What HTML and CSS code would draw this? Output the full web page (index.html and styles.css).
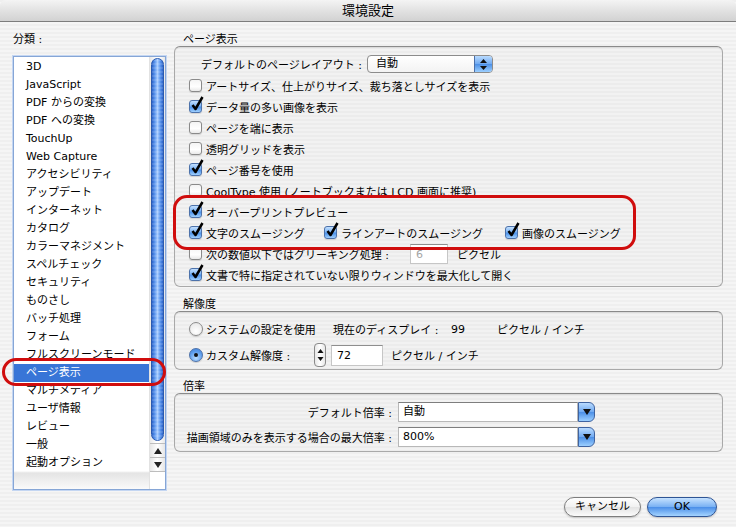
FILE: index.html
```html
<!DOCTYPE html>
<html lang="ja">
<head>
    <meta charset="UTF-8">
    <title>環境設定</title>
    <link rel="stylesheet" href="styles.css">
</head>
<body>
<div class="window">
    <div class="titlebar">環境設定</div>

    <div class="main">
        <div class="side">
            <div class="side-label">分類 :</div>
            <div class="listbox">
                <ul class="items">
                    <li>3D</li>
                    <li>JavaScript</li>
                    <li>PDF からの変換</li>
                    <li>PDF への変換</li>
                    <li>TouchUp</li>
                    <li>Web Capture</li>
                    <li>アクセシビリティ</li>
                    <li>アップデート</li>
                    <li>インターネット</li>
                    <li>カタログ</li>
                    <li>カラーマネジメント</li>
                    <li>スペルチェック</li>
                    <li>セキュリティ</li>
                    <li>ものさし</li>
                    <li>バッチ処理</li>
                    <li>フォーム</li>
                    <li>フルスクリーンモード</li>
                    <li class="selected">ページ表示</li>
                    <li>マルチメディア</li>
                    <li>ユーザ情報</li>
                    <li>レビュー</li>
                    <li>一般</li>
                    <li>起動オプション</li>
                </ul>
                <div class="scrollbar">
                    <div class="track"><div class="thumb"></div></div>
                    <div class="arrow">
                        <svg width="8" height="6" viewBox="0 0 8 6"><path d="M4 0 L8 6 L0 6 Z" fill="#222"/></svg>
                    </div>
                    <div class="arrow">
                        <svg width="8" height="6" viewBox="0 0 8 6"><path d="M0 0 L8 0 L4 6 Z" fill="#222"/></svg>
                    </div>
                    <div class="corner"></div>
                </div>
            </div>
        </div>

        <div class="panel">
            <div class="group-label">ページ表示</div>
            <div class="group group-page">
                <div class="row-popup">
                    <span class="popup-label">デフォルトのページレイアウト :</span>
                    <span class="popup">
                        <span class="popup-text">自動</span>
                        <span class="popup-btn">
                            <svg width="7" height="11" viewBox="0 0 7 11"><path d="M3.5 0 L7 4 L0 4 Z M0 7 L7 7 L3.5 11 Z" fill="#111"/></svg>
                        </span>
                    </span>
                </div>
                <div class="row"><span class="cb"></span><span>アートサイズ、仕上がりサイズ、裁ち落としサイズを表示</span></div>
                <div class="row"><span class="cb on"><svg width="14" height="16" viewBox="0 0 14 16"><path d="M2.5 9 L5.5 13 L12.5 1" fill="none" stroke="#000" stroke-width="2.5" stroke-linejoin="round"/></svg></span><span>データ量の多い画像を表示</span></div>
                <div class="row"><span class="cb"></span><span>ページを端に表示</span></div>
                <div class="row"><span class="cb"></span><span>透明グリッドを表示</span></div>
                <div class="row"><span class="cb on"><svg width="14" height="16" viewBox="0 0 14 16"><path d="M2.5 9 L5.5 13 L12.5 1" fill="none" stroke="#000" stroke-width="2.5" stroke-linejoin="round"/></svg></span><span>ページ番号を使用</span></div>
                <div class="row"><span class="cb"></span><span>CoolType 使用 (ノートブックまたは LCD 画面に推奨)</span></div>
                <div class="row"><span class="cb on"><svg width="14" height="16" viewBox="0 0 14 16"><path d="M2.5 9 L5.5 13 L12.5 1" fill="none" stroke="#000" stroke-width="2.5" stroke-linejoin="round"/></svg></span><span>オーバープリントプレビュー</span></div>
                <div class="row">
                    <span class="smooth smooth-text"><span class="cb on"><svg width="14" height="16" viewBox="0 0 14 16"><path d="M2.5 9 L5.5 13 L12.5 1" fill="none" stroke="#000" stroke-width="2.5" stroke-linejoin="round"/></svg></span><span>文字のスムージング</span></span>
                    <span class="smooth smooth-line"><span class="cb on"><svg width="14" height="16" viewBox="0 0 14 16"><path d="M2.5 9 L5.5 13 L12.5 1" fill="none" stroke="#000" stroke-width="2.5" stroke-linejoin="round"/></svg></span><span>ラインアートのスムージング</span></span>
                    <span class="smooth"><span class="cb on"><svg width="14" height="16" viewBox="0 0 14 16"><path d="M2.5 9 L5.5 13 L12.5 1" fill="none" stroke="#000" stroke-width="2.5" stroke-linejoin="round"/></svg></span><span>画像のスムージング</span></span>
                </div>
                <div class="row">
                    <span class="cb"></span><span class="greek-label">次の数値以下ではグリーキング処理 :</span>
                    <span class="field field-greek disabled">6</span>
                    <span>ピクセル</span>
                </div>
                <div class="row"><span class="cb on"><svg width="14" height="16" viewBox="0 0 14 16"><path d="M2.5 9 L5.5 13 L12.5 1" fill="none" stroke="#000" stroke-width="2.5" stroke-linejoin="round"/></svg></span><span>文書で特に指定されていない限りウィンドウを最大化して開く</span></div>
            </div>

            <div class="group-label">解像度</div>
            <div class="group group-res">
                <div class="row res-row1">
                    <span class="radio"></span>
                    <span class="res-system">システムの設定を使用</span>
                    <span class="res-current">現在のディスプレイ :</span>
                    <span class="res-value">99</span>
                    <span>ピクセル / インチ</span>
                </div>
                <div class="row res-row2">
                    <span class="radio on"></span>
                    <span class="res-custom">カスタム解像度 :</span>
                    <span class="stepper">
                        <svg width="7" height="16" viewBox="0 0 7 16"><path d="M3.5 2 L6.5 6 L0.5 6 Z M0.5 10 L6.5 10 L3.5 14 Z" fill="#111"/></svg>
                    </span>
                    <span class="field field-res">72</span>
                    <span>ピクセル / インチ</span>
                </div>
            </div>

            <div class="group-label">倍率</div>
            <div class="group group-zoom">
                <div class="combo-row">
                    <span class="combo-label">デフォルト倍率 :</span>
                    <span class="combo">
                        <span class="combo-text">自動</span>
                        <span class="combo-btn"><svg width="8" height="6" viewBox="0 0 8 6"><path d="M0 0 L8 0 L4 6 Z" fill="#111"/></svg></span>
                    </span>
                </div>
                <div class="combo-row">
                    <span class="combo-label">描画領域のみを表示する場合の最大倍率 :</span>
                    <span class="combo">
                        <span class="combo-text">800%</span>
                        <span class="combo-btn"><svg width="8" height="6" viewBox="0 0 8 6"><path d="M0 0 L8 0 L4 6 Z" fill="#111"/></svg></span>
                    </span>
                </div>
            </div>
        </div>
    </div>

    <div class="footer">
        <span class="btn">キャンセル</span>
        <span class="btn btn-ok">OK</span>
    </div>

    <!-- red annotation marks drawn over the dialog -->
    <div class="mark mark-list"></div>
    <div class="mark mark-options"></div>
</div>
</body>
</html>
```

FILE: styles.css
```css
*,
*:after,
*:before
{
    margin: 0;
    padding: 0;
    box-sizing: border-box;
}

body
{
    width: 736px;
    height: 527px;
    overflow: hidden;
    font-family: "DejaVu Sans", "Noto Sans CJK JP", sans-serif;
    font-size: 11px;
    color: #000;
}

.window
{
    position: relative;
    width: 736px;
    height: 527px;
    background: repeating-linear-gradient(#efefef 0 2px, #f5f5f5 2px 4px);
}

.titlebar
{
    height: 22px;
    line-height: 21px;
    text-align: center;
    font-size: 13px;
    border-bottom: 1px solid #7d7d7d;
    border-radius: 6px 6px 0 0;
    background: linear-gradient(#f4f4f4, #e2e2e2 50%, #d2d2d2);
}

.main
{
    display: flex;
    padding: 12px 13px 0 13px;
}

/* left column */
.side
{
    width: 153px;
}

.side-label
{
    height: 12px;
    line-height: 12px;
    margin-bottom: 10px;
}

.listbox
{
    display: flex;
    height: 434px;
    border: 1px solid #86a6d6;
    box-shadow: 0 0 0 1px #c4d6f2;
    background: #fff;
}

.items
{
    list-style: none;
    flex: 1;
    padding-top: 1px;
    background: linear-gradient(to bottom, #fff 414px, #e4e4e4 416px, #fafafa 432px);
}

.items li
{
    height: 18px;
    line-height: 18px;
    padding-left: 12px;
    white-space: nowrap;
}

.items li.selected
{
    background: #3875d7;
    color: #fff;
}

.scrollbar
{
    width: 16px;
    display: flex;
    flex-direction: column;
    border-left: 1px solid #e2e2e2;
}

.track
{
    height: 386px;
    padding: 1px 1px 2px 1px;
    background: linear-gradient(to right, #e8e8e8, #fff 40%, #fff 60%, #e8e8e8);
}

.thumb
{
    height: 100%;
    border-radius: 7px;
    border: 1px solid #2b5bb0;
    background:
        repeating-linear-gradient(rgba(255,255,255,.12) 0 2px, rgba(255,255,255,0) 2px 4px),
        linear-gradient(to right, #2c63c8, #5a95ee 25%, #a8cdff 50%, #5a95ee 75%, #2c63c8);
}

.arrow
{
    height: 14px;
    display: flex;
    align-items: center;
    justify-content: center;
    border-top: 1px solid #bdbdbd;
    background: linear-gradient(to right, #e6e6e6, #fff 50%, #e6e6e6);
}

.corner
{
    flex: 1;
    border-top: 1px solid #bdbdbd;
    background: #fff;
}

/* right column */
.panel
{
    width: 549px;
    margin-left: 8px;
}

.group-label
{
    height: 12px;
    line-height: 12px;
    padding-left: 9px;
}

.group
{
    border: 1px solid #a9a9a9;
    border-top-color: #8a8a8a;
    border-radius: 6px;
    background: repeating-linear-gradient(#ececec 0 2px, #f2f2f2 2px 4px);
    box-shadow: inset 0 1px 1px rgba(0,0,0,.08);
}

.group-page
{
    height: 241px;
    padding-top: 8px;
    margin-bottom: 12px;
}

.group-res
{
    height: 59px;
    padding-top: 7px;
    margin-bottom: 11px;
}

.group-zoom
{
    height: 59px;
    padding-top: 8px;
}

.row-popup
{
    display: flex;
    align-items: center;
    height: 18px;
    margin-bottom: 2px;
}

.popup-label
{
    width: 187px;
    text-align: right;
    margin-right: 5px;
}

.popup
{
    display: flex;
    width: 126px;
    height: 18px;
    border: 1px solid #8c8c8c;
    border-radius: 4px;
    background: linear-gradient(#fff, #f3f3f3);
    overflow: hidden;
}

.popup-text
{
    flex: 1;
    padding-left: 8px;
    line-height: 16px;
}

.popup-btn
{
    width: 18px;
    display: flex;
    align-items: center;
    justify-content: center;
    border-left: 1px solid #4a6fa8;
    background: linear-gradient(#b9dbff, #6fa9f1 50%, #4b8fe6 51%, #9ccfff);
}

.row
{
    display: flex;
    align-items: center;
    height: 21px;
    padding-left: 14px;
    white-space: nowrap;
}

.cb
{
    position: relative;
    flex: none;
    width: 13px;
    height: 13px;
    margin-right: 4px;
    border: 1px solid #8a8a8a;
    border-radius: 3px;
    background: linear-gradient(#f4f4f4, #fff 60%, #e9e9e9);
    box-shadow: 0 1px 1px rgba(0,0,0,.12);
}

.cb.on
{
    border-color: #4d72aa;
    background: linear-gradient(#c3e0ff, #7db4f4 45%, #4b90e8 55%, #9fd0ff);
}

.cb svg
{
    position: absolute;
    left: 0;
    top: -5px;
    overflow: visible;
}

.smooth
{
    display: flex;
    align-items: center;
}

.smooth-text
{
    width: 135px;
}

.smooth-line
{
    width: 181px;
}

.greek-label
{
    width: 204px;
}

.field
{
    height: 20px;
    line-height: 19px;
    background: #fff;
    border: 1px solid #c6c6c6;
    border-top-color: #8e8e8e;
    padding-left: 5px;
}

.field-greek
{
    width: 38px;
    margin-right: 9px;
}

.disabled
{
    color: #a5a5a5;
}

/* resolution */
.radio
{
    flex: none;
    width: 14px;
    height: 14px;
    margin-right: 3px;
    border: 1px solid #8a8a8a;
    border-radius: 50%;
    background: radial-gradient(circle at 50% 70%, #fff, #e4e4e4);
    box-shadow: 0 1px 1px rgba(0,0,0,.15);
    display: flex;
    align-items: center;
    justify-content: center;
}

.radio.on
{
    border-color: #4d72aa;
    background: radial-gradient(circle at 50% 75%, #b8dcff, #5b9cec 60%, #3f7fd8);
}

.radio.on:after
{
    content: "";
    width: 4px;
    height: 4px;
    border-radius: 50%;
    background: #111;
}

.res-row1
{
    height: 20px;
}

.res-row2
{
    height: 24px;
    margin-top: 4px;
}

.res-system
{
    width: 127px;
}

.res-current
{
    width: 118px;
}

.res-value
{
    width: 46px;
}

.res-custom
{
    width: 108px;
}

.stepper
{
    width: 12px;
    height: 24px;
    border: 1px solid #8a8a8a;
    border-radius: 4px;
    background: linear-gradient(to right, #e8e8e8, #fff 50%, #e8e8e8);
    display: flex;
    align-items: center;
    justify-content: center;
    margin-right: 5px;
}

.field-res
{
    width: 52px;
    height: 21px;
    margin-right: 8px;
}

/* magnification */
.combo-row
{
    display: flex;
    align-items: center;
    height: 20px;
    margin-bottom: 5px;
}

.combo-label
{
    width: 217px;
    padding-left: 11px;
    text-align: right;
    white-space: nowrap;
    margin-right: 6px;
}

.combo
{
    display: flex;
    width: 197px;
    height: 20px;
}

.combo-text
{
    flex: 1;
    background: #fff;
    border: 1px solid #b8b8b8;
    border-top-color: #7e7e7e;
    padding-left: 4px;
    line-height: 18px;
}

.combo-btn
{
    width: 17px;
    display: flex;
    align-items: center;
    justify-content: center;
    border: 1px solid #3f63a0;
    border-radius: 0 6px 6px 0;
    background: linear-gradient(#b9dbff, #6fa9f1 50%, #4b8fe6 51%, #9ccfff);
}

/* buttons */
.footer
{
    display: flex;
    justify-content: flex-end;
    gap: 6px;
    padding-right: 19px;
    margin-top: 7px;
}

.btn
{
    width: 77px;
    height: 20px;
    line-height: 18px;
    text-align: center;
    border: 1px solid #7d7d7d;
    border-radius: 10px;
    background: linear-gradient(#fefefe, #f1f1f1 50%, #e3e3e3 51%, #fbfbfb);
    box-shadow: 0 1px 2px rgba(0,0,0,.2);
}

.btn-ok
{
    width: 70px;
    border-color: #2f5595;
    background: linear-gradient(#c6e2ff, #77b0f3 50%, #4a8ee8 51%, #a4d4ff);
}

/* red marks */
.mark
{
    position: absolute;
    border: 3px solid #d00d0d;
    border-radius: 14px;
}

.mark-list
{
    left: 2px;
    top: 358px;
    width: 164px;
    height: 28px;
}

.mark-options
{
    left: 173px;
    top: 195px;
    width: 463px;
    height: 55px;
}
```
